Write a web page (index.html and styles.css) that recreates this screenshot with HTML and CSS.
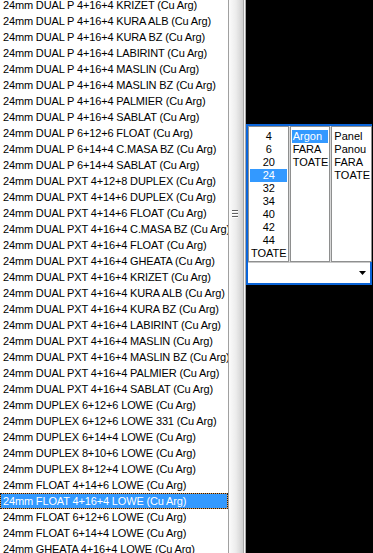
FILE: index.html
```html
<!DOCTYPE html>
<html lang="ro">
<head>
  <meta charset="UTF-8" />
  <title>Selectie geam</title>
  <link rel="stylesheet" href="styles.css">
</head>
<body>

  <div class="window">
    <ul class="products">
      <li>24mm DUAL P 4+16+4 KRIZET (Cu Arg)</li>
      <li>24mm DUAL P 4+16+4 KURA ALB (Cu Arg)</li>
      <li>24mm DUAL P 4+16+4 KURA BZ (Cu Arg)</li>
      <li>24mm DUAL P 4+16+4 LABIRINT (Cu Arg)</li>
      <li>24mm DUAL P 4+16+4 MASLIN (Cu Arg)</li>
      <li>24mm DUAL P 4+16+4 MASLIN BZ (Cu Arg)</li>
      <li>24mm DUAL P 4+16+4 PALMIER (Cu Arg)</li>
      <li>24mm DUAL P 4+16+4 SABLAT (Cu Arg)</li>
      <li>24mm DUAL P 6+12+6 FLOAT (Cu Arg)</li>
      <li>24mm DUAL P 6+14+4 C.MASA BZ (Cu Arg)</li>
      <li>24mm DUAL P 6+14+4 SABLAT (Cu Arg)</li>
      <li>24mm DUAL PXT 4+12+8 DUPLEX (Cu Arg)</li>
      <li>24mm DUAL PXT 4+14+6 DUPLEX (Cu Arg)</li>
      <li>24mm DUAL PXT 4+14+6 FLOAT (Cu Arg)</li>
      <li>24mm DUAL PXT 4+16+4 C.MASA BZ (Cu Arg)</li>
      <li>24mm DUAL PXT 4+16+4 FLOAT (Cu Arg)</li>
      <li>24mm DUAL PXT 4+16+4 GHEATA (Cu Arg)</li>
      <li>24mm DUAL PXT 4+16+4 KRIZET (Cu Arg)</li>
      <li>24mm DUAL PXT 4+16+4 KURA ALB (Cu Arg)</li>
      <li>24mm DUAL PXT 4+16+4 KURA BZ (Cu Arg)</li>
      <li>24mm DUAL PXT 4+16+4 LABIRINT (Cu Arg)</li>
      <li>24mm DUAL PXT 4+16+4 MASLIN (Cu Arg)</li>
      <li>24mm DUAL PXT 4+16+4 MASLIN BZ (Cu Arg)</li>
      <li>24mm DUAL PXT 4+16+4 PALMIER (Cu Arg)</li>
      <li>24mm DUAL PXT 4+16+4 SABLAT (Cu Arg)</li>
      <li>24mm DUPLEX 6+12+6 LOWE (Cu Arg)</li>
      <li>24mm DUPLEX 6+12+6 LOWE 331 (Cu Arg)</li>
      <li>24mm DUPLEX 6+14+4 LOWE (Cu Arg)</li>
      <li>24mm DUPLEX 8+10+6 LOWE (Cu Arg)</li>
      <li>24mm DUPLEX 8+12+4 LOWE (Cu Arg)</li>
      <li>24mm FLOAT 4+14+6 LOWE (Cu Arg)</li>
      <li class="selected">24mm FLOAT 4+16+4 LOWE (Cu Arg)</li>
      <li>24mm FLOAT 6+12+6 LOWE (Cu Arg)</li>
      <li>24mm FLOAT 6+14+4 LOWE (Cu Arg)</li>
      <li>24mm GHEATA 4+16+4 LOWE (Cu Arg)</li>
    </ul>

    <div class="splitter">
      <div class="grip">
        <span></span><span></span><span></span>
      </div>
    </div>

    <div class="side">
      <div class="filters">
        <div class="lists">
          <ul class="box centered">
            <li>4</li>
            <li>6</li>
            <li>20</li>
            <li class="selected">24</li>
            <li>32</li>
            <li>34</li>
            <li>40</li>
            <li>42</li>
            <li>44</li>
            <li>TOATE</li>
          </ul>
          <ul class="box">
            <li class="selected">Argon</li>
            <li>FARA</li>
            <li>TOATE</li>
          </ul>
          <ul class="box">
            <li>Panel</li>
            <li>Panou</li>
            <li>FARA</li>
            <li>TOATE</li>
          </ul>
        </div>
        <div class="combo">
          <svg width="7" height="4" viewBox="0 0 7 4"><path d="M0 0h7L3.5 4z" fill="#000"/></svg>
        </div>
      </div>
    </div>
  </div>

</body>
</html>
```

FILE: styles.css
```css
* {
  box-sizing: border-box;
}

body {
  margin: 0;
  padding: 0;
  background-color: #000;
  font-family: "Liberation Sans", Arial, sans-serif;
  font-size: 11px;
  color: #000;
}

ul {
  list-style: none;
  margin: 0;
  padding: 0;
}

.window {
  display: flex;
  height: 553px;
  overflow: hidden;
}

/* main product list */
.products {
  width: 228px;
  padding: 0 0 0 1px;
  margin-top: -3px;
  background-color: #fff;
  flex-shrink: 0;
}

.products li {
  height: 16px;
  line-height: 14px;
  padding-left: 2px;
  white-space: nowrap;
  letter-spacing: -0.15px;
  border: 1px solid transparent;
  border-left: 0;
}

.products li.selected {
  color: #fff;
  border: 1px dotted #1a1a1a;
  margin-left: -1px;
  padding-left: 2px;
  background: linear-gradient(#3399ff, #3399ff) padding-box,
              linear-gradient(#e89c50, #e89c50) border-box;
}

/* splitter between the list and the filter panel */
.splitter {
  width: 18px;
  flex-shrink: 0;
  border-left: 1px solid #a0a0a0;
  border-right: 3px double #a8a8a8;
  background: linear-gradient(to right, #fbfbfb, #ececec 50%, #cfcfcf);
  padding-top: 210px;
}

.grip {
  display: flex;
  flex-direction: column;
  gap: 1px;
  margin-left: 3px;
}

.grip span {
  width: 6px;
  height: 2px;
  background-color: #606060;
  border-bottom: 1px solid #fff;
}

/* filter panel on the right */
.side {
  flex: 1;
  padding-top: 124px;
}

.filters {
  width: 126px;
  border: 2px solid #0a64d8;
  background-color: #fff;
}

.lists {
  display: flex;
  gap: 1px;
  background-color: #d8d8d8;
  border-bottom: 1px solid #c8c8c8;
}

.box {
  flex: 1;
  height: 136px;
  padding: 3px 1px 0;
  border: 1px solid #8e8f8f;
  background-color: #fff;
}

.box li {
  height: 13px;
  line-height: 13px;
  padding-left: 1px;
  white-space: nowrap;
}

.box li.selected {
  background-color: #3399ff;
  color: #fff;
}

.centered li {
  text-align: center;
}

.combo {
  height: 20px;
  display: flex;
  justify-content: flex-end;
  align-items: center;
  padding-right: 4px;
}
```
